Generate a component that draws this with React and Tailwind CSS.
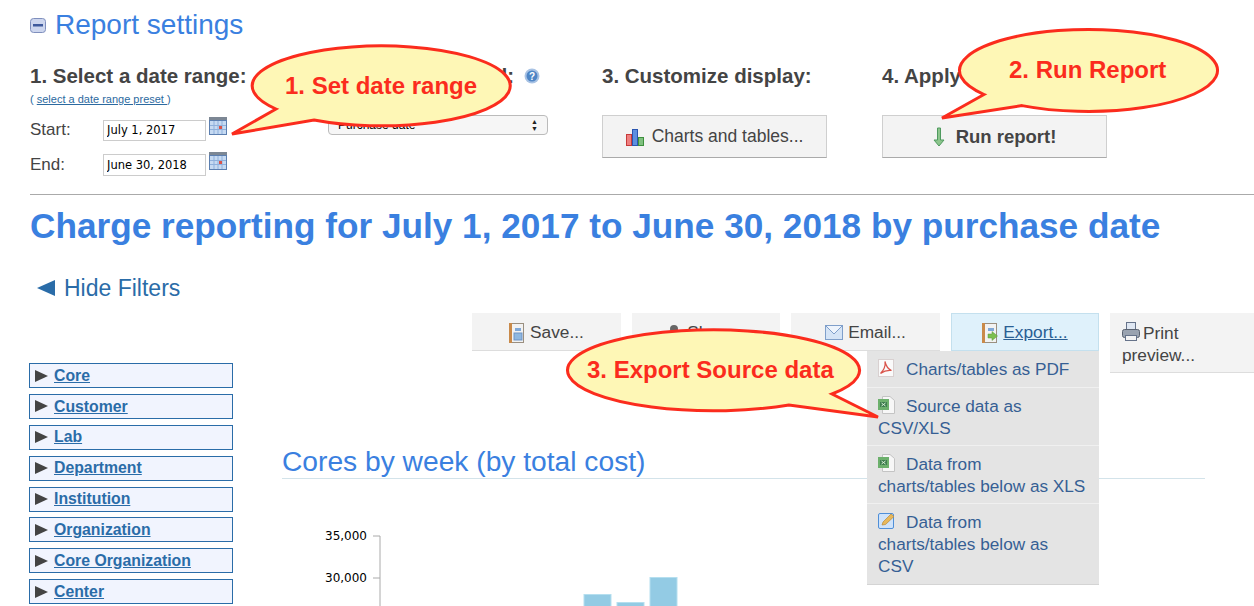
const filters = ['Core', 'Customer', 'Lab', 'Department', 'Institution', 'Organization', 'Core Organization', 'Center'];

function MinusBox() {
  return (
    <svg width="16" height="15" viewBox="0 0 16 15" className="shrink-0">
      <rect x="0.5" y="0.5" width="15" height="14" rx="3" fill="#cdd6ee" stroke="#7f8fbd" />
      <rect x="3" y="6" width="10" height="2.5" fill="#3f5a9c" />
    </svg>
  );
}

function Calendar() {
  return (
    <svg width="18" height="18" viewBox="0 0 18 18" className="shrink-0">
      <rect x="0" y="0" width="18" height="18" fill="#5c7fb0" />
      <rect x="0" y="0" width="18" height="3" fill="#7c8794" />
      <rect x="1" y="4" width="16" height="13" fill="#c6daf2" />
      <path d="M1 8.5H17M1 12.5H17M5 4V17M9 4V17M13 4V17" stroke="#8fb0dc" strokeWidth="1" />
      <rect x="10" y="9" width="3" height="3" fill="#d9534a" />
    </svg>
  );
}

function Help() {
  return (
    <svg width="16" height="16" viewBox="0 0 16 16" className="shrink-0">
      <circle cx="8" cy="8" r="7.5" fill="#a9c3e4" />
      <circle cx="8" cy="8" r="5.5" fill="#4f86c6" />
      <text x="8" y="11.5" textAnchor="middle" fill="#fff" className="text-[10px] font-bold">?</text>
    </svg>
  );
}

function ChartIcon() {
  return (
    <svg width="18" height="18" viewBox="0 0 18 18" className="shrink-0">
      <rect x="0.5" y="6.5" width="5" height="11" fill="#ee7f7f" stroke="#c73a3a" />
      <rect x="6.5" y="1.5" width="5" height="16" fill="#5d8fe0" stroke="#2a55b0" />
      <rect x="12.5" y="9.5" width="5" height="8" fill="#7fc07f" stroke="#3d8f3d" />
    </svg>
  );
}

function ArrowDown() {
  return (
    <svg width="12" height="20" viewBox="0 0 12 20" className="shrink-0">
      <path d="M4.5 1H7.5V13H11L6 19L1 13H4.5Z" fill="#8cc58c" stroke="#4f9a5f" strokeWidth="1" />
    </svg>
  );
}

function BookIcon({ arrow }) {
  return (
    <svg width="16" height="20" viewBox="0 0 16 20" className="shrink-0">
      <rect x="0.5" y="0.5" width="14" height="19" fill="#f2f2f2" stroke="#9a8f80" />
      <rect x="0" y="0" width="3" height="20" fill="#c98a4a" />
      <rect x="6" y="5" width="6" height="3" fill="#7fa8d8" />
      {arrow ? (
        <path d="M6 11H10V8.5L15.5 13L10 17.5V15H6Z" fill="#7cbf4f" stroke="#5a9a3a" strokeWidth="0.5" />
      ) : (
        <rect x="5" y="10" width="8" height="7" fill="#8fb8e0" stroke="#6f93c4" />
      )}
    </svg>
  );
}

function ShareIcon() {
  return (
    <svg width="18" height="18" viewBox="0 0 18 18" className="shrink-0">
      <circle cx="10" cy="5" r="4" fill="#666" />
      <rect x="4" y="9" width="12" height="9" rx="3" fill="#777" />
    </svg>
  );
}

function MailIcon() {
  return (
    <svg width="18" height="15" viewBox="0 0 18 15" className="shrink-0">
      <rect x="0.5" y="0.5" width="17" height="14" fill="#d5e4f6" stroke="#7f9fca" />
      <path d="M1 1L9 9L17 1" fill="#eef4fc" stroke="#7f9fca" />
    </svg>
  );
}

function PrintIcon() {
  return (
    <svg width="18" height="19" viewBox="0 0 18 19" className="shrink-0">
      <rect x="4.5" y="0.5" width="9" height="7" fill="#dfe7f2" stroke="#66738a" />
      <rect x="0.5" y="7.5" width="17" height="8" rx="2" fill="#9aa3b0" stroke="#5a6270" />
      <rect x="3.5" y="13.5" width="11" height="5" fill="#f4f4f4" stroke="#66738a" />
    </svg>
  );
}

function PdfIcon() {
  return (
    <svg width="16" height="18" viewBox="0 0 16 18" className="shrink-0">
      <rect x="0.5" y="0.5" width="15" height="17" fill="#fafafa" stroke="#d8d0d0" />
      <path d="M2.5 14.5C6 11 7.5 6 7 2.5C8 7 10 10 13.5 11.5C9.5 11 6 12 2.5 14.5Z" fill="none" stroke="#d9534a" strokeWidth="1.2" />
    </svg>
  );
}

function XlsIcon() {
  return (
    <svg width="17" height="18" viewBox="0 0 17 18" className="shrink-0">
      <path d="M4.5 0.5H12L16.5 4.5V17.5H4.5Z" fill="#f7f7f7" stroke="#c4c4c4" />
      <rect x="0" y="3" width="11" height="11" fill="#6cb06c" />
      <rect x="2" y="6" width="7" height="5" fill="#3f7f4f" />
      <path d="M3.5 7L7.5 10M7.5 7L3.5 10" stroke="#d8efd8" strokeWidth="1" />
    </svg>
  );
}

function EditIcon() {
  return (
    <svg width="17" height="17" viewBox="0 0 17 17" className="shrink-0">
      <rect x="0.5" y="1.5" width="15" height="15" rx="1.5" fill="#cfe3fa" stroke="#4f8fd8" />
      <path d="M4 13L5 10L13 2L16 4.5L7.5 12.5Z" fill="#e8b85a" stroke="#b98a3a" strokeWidth="0.7" />
    </svg>
  );
}

function ToolButton({ icon, children, active, width }) {
  return (
    <div className={`${width} h-[38px] pt-[2px] flex items-center justify-center gap-[5px] border-b text-[17.3px] text-[#444] ${active ? 'bg-[#dff1fb] border border-[#c4e0ee]' : 'bg-[#f3f3f3] border-[#dddddd]'}`}>
      {icon}
      {children}
    </div>
  );
}

function MenuItem({ icon, first, rest, className }) {
  return (
    <div className={`px-[11px] pt-[7px] leading-[22px] ${className}`}>
      <span className="inline-flex w-[28px] align-top pt-[1px]">{icon}</span>
      {first}
      {rest && <><br />{rest}</>}
    </div>
  );
}

export default function App() {
  return (
    <div className="relative w-[1254px] h-[606px] overflow-hidden bg-white font-['Liberation_Sans',sans-serif] text-[#444]">
      <div className="pl-[30px] pt-[9px]">
        <div className="flex items-center gap-[9px] h-[32px]">
          <MinusBox />
          <h2 className="text-[28px] leading-[32px] text-[#3a80e0]">Report settings</h2>
        </div>

        <div className="grid grid-cols-[298px_274px_280px_1fr] mt-[23px] h-[130px]">
          <div>
            <div className="text-[20.5px] leading-[24px] font-bold whitespace-nowrap">1. Select a date range:</div>
            <div className="text-[11px] leading-[14px] mt-[4px] text-[#2c6aa0]">
              ( <span className="underline">select a date range preset </span>)
            </div>
            <div className="flex items-center mt-[12px] h-[24px]">
              <span className="w-[73px] text-[17px]">Start:</span>
              <input readOnly value="July 1, 2017" className="w-[103px] h-[21px] border border-[#cccccc] px-[3px] text-[11.5px] text-black outline-none font-['DejaVu_Sans',sans-serif]" />
              <span className="ml-[3px] -mt-[8px]"><Calendar /></span>
            </div>
            <div className="flex items-center mt-[11px] h-[24px]">
              <span className="w-[73px] text-[17px]">End:</span>
              <input readOnly value="June 30, 2018" className="w-[103px] h-[22px] border border-[#cccccc] px-[3px] text-[11.5px] text-black outline-none font-['DejaVu_Sans',sans-serif]" />
              <span className="ml-[3px] -mt-[9px]"><Calendar /></span>
            </div>
          </div>

          <div>
            <div className="flex items-center gap-[10px] w-[212px] justify-end h-[24px]">
              <span className="text-[20.5px] font-bold whitespace-nowrap">2. Select date field:</span>
              <Help />
            </div>
            <div className="mt-[27px] w-[220px] h-[20px] rounded-[4px] border border-[#bbbbbb] bg-[#f6f6f6] flex items-center justify-between px-[9px] text-[12px] text-black">
              <span>Purchase date</span>
              <span className="text-[7px] leading-[7px] flex flex-col items-center text-[#222]"><span>▲</span><span>▼</span></span>
            </div>
          </div>

          <div>
            <div className="text-[20.5px] leading-[24px] font-bold whitespace-nowrap">3. Customize display:</div>
            <div className="mt-[27px] w-[225px] h-[43px] bg-[#f3f3f3] border border-[#cfcfcf] border-b-[#aaaaaa] flex items-center justify-center gap-[8px] text-[17.5px]">
              <ChartIcon />
              Charts and tables...
            </div>
          </div>

          <div>
            <div className="text-[20.5px] leading-[24px] font-bold whitespace-nowrap">4. Apply settings:</div>
            <div className="mt-[27px] w-[225px] h-[43px] bg-[#f3f3f3] border border-[#cfcfcf] border-b-[#aaaaaa] flex items-center justify-center gap-[11px] text-[18.5px] font-bold">
              <ArrowDown />
              Run report!
            </div>
          </div>
        </div>

        <div className="border-t border-[#aaaaaa] h-0" />

        <h1 className="mt-[11px] text-[35.2px] leading-[40px] font-bold text-[#3a80e0] whitespace-nowrap">
          Charge reporting for July 1, 2017 to June 30, 2018 by purchase date
        </h1>

        <div className="flex items-center gap-[9px] mt-[27px] pl-[7px] h-[30px] text-[#2a6ca8] text-[23px]">
          <span className="w-0 h-0 border-y-[8px] border-y-transparent border-r-[18px] border-r-[#2a6ca8]" />
          Hide Filters
        </div>

        <div className="flex justify-end gap-[11px] items-start mt-[10px]">
          <ToolButton width="w-[149px]" icon={<BookIcon />}>Save...</ToolButton>
          <ToolButton width="w-[148px]" icon={<ShareIcon />}>Share...</ToolButton>
          <ToolButton width="w-[149px]" icon={<MailIcon />}>Email...</ToolButton>
          <div className="relative">
            <ToolButton width="w-[148px]" icon={<BookIcon arrow />} active><span className="underline text-[#2a5f94]">Export...</span></ToolButton>
            <div className="absolute right-0 top-full w-[232px] bg-[#e4e4e4] border-b border-[#d4d4d4] text-[17.2px] text-[#365f94] z-10">
              <MenuItem icon={<PdfIcon />} first="Charts/tables as PDF" className="pb-[7px] border-b border-[#f0f0f0]" />
              <MenuItem icon={<XlsIcon />} first="Source data as" rest="CSV/XLS" className="pb-[6px] border-b border-[#f0f0f0]" />
              <MenuItem icon={<XlsIcon />} first="Data from" rest="charts/tables below as XLS" className="pb-[6px] border-b border-[#f0f0f0]" />
              <MenuItem icon={<EditIcon />} first="Data from" rest={<>charts/tables below as<br />CSV</>} className="pb-[7px]" />
            </div>
          </div>
          <div className="w-[144px] h-[60px] bg-[#f3f3f3] border-b border-[#dddddd] pl-[12px] pt-[9px] text-[17.3px] leading-[22px]">
            <span className="inline-flex align-top mr-[3px]"><PrintIcon /></span>
            Print
            <br />
            preview...
          </div>
        </div>

        <div className="flex -mt-[10px] -ml-[1px]">
          <div className="w-[204px] flex flex-col gap-[5.9px] shrink-0">
            {filters.map((f) => (
              <div key={f} className="h-[25px] bg-[#f1f4fe] border border-[#2a6ca8] flex items-center pl-[5px] gap-[6px] text-[15.8px]">
                <span className="w-0 h-0 border-y-[6px] border-y-transparent border-l-[13px] border-l-[#444]" />
                <span className="font-bold underline text-[#2a6ca8]">{f}</span>
              </div>
            ))}
          </div>
          <div className="ml-[49px] w-[923px] pt-[81px]">
            <h3 className="text-[28.2px] leading-[34px] text-[#3a80e0] border-b border-[#d3e3ea] whitespace-nowrap h-[35px]">Cores by week (by total cost)</h3>
            <svg width="400" height="130" viewBox="0 0 400 130" className="block">
              <text x="85" y="61" textAnchor="end" fill="#000" className="text-[12px] font-['DejaVu_Sans',sans-serif]">35,000</text>
              <text x="85" y="103" textAnchor="end" fill="#000" className="text-[12px] font-['DejaVu_Sans',sans-serif]">30,000</text>
              <path d="M91 57H98V130M91 99H98" fill="none" stroke="#aaaaaa" />
              <rect x="302" y="115.5" width="27" height="20" fill="#93cbe4" stroke="#b5dfef" />
              <rect x="335" y="123.5" width="27" height="20" fill="#93cbe4" stroke="#b5dfef" />
              <rect x="368" y="98.5" width="27" height="40" fill="#93cbe4" stroke="#b5dfef" />
            </svg>
          </div>
        </div>
      </div>

      <svg width="1254" height="606" viewBox="0 0 1254 606" className="absolute inset-0 pointer-events-none z-20">
        <g fill="#fef7b6" stroke="#fb2c1d" strokeWidth="3" strokeLinejoin="miter">
          <path d="M276 109A129 40 0 1 1 314 120L232 134Z" />
          <path d="M984 94.5A129 41 0 1 1 1022 105.6L942 118Z" />
          <path d="M789 405A146 40.5 0 1 1 832 394L878 417Z" />
        </g>
        <g fill="#fb2c1d" className="font-bold text-[24px]">
          <text x="285" y="94">1. Set date range</text>
          <text x="1009" y="78">2. Run Report</text>
          <text x="587" y="378">3. Export Source data</text>
        </g>
      </svg>
    </div>
  );
}
